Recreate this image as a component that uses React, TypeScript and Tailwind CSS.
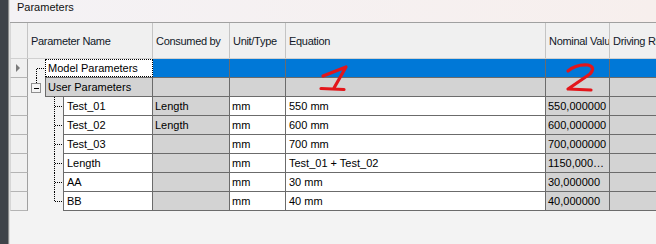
import React from 'react';

type Param = {
  name: string;
  consumed?: string;
  unit: string;
  equation: string;
  nominal: string;
};

const userParams: Param[] = [
  { name: 'Test_01', consumed: 'Length', unit: 'mm', equation: '550 mm', nominal: '550,000000' },
  { name: 'Test_02', consumed: 'Length', unit: 'mm', equation: '600 mm', nominal: '600,000000' },
  { name: 'Test_03', unit: 'mm', equation: '700 mm', nominal: '700,000000' },
  { name: 'Length', unit: 'mm', equation: 'Test_01 + Test_02', nominal: '1150,000000' },
  { name: 'AA', unit: 'mm', equation: '30 mm', nominal: '30,000000' },
  { name: 'BB', unit: 'mm', equation: '40 mm', nominal: '40,000000' },
];

// body grid line colour
const cell = 'h-full border-b border-r border-[#6b6b6b] whitespace-nowrap overflow-hidden';
const headCell =
  'h-full flex items-center pl-[3px] pt-[2px] border-r border-[#c4c4c4] whitespace-nowrap overflow-hidden';

function RowHead({ arrow }: { arrow?: boolean }) {
  return (
    <div className="flex h-full w-[18px] shrink-0 items-center justify-center border-b border-r border-l border-b-[#b4b4b4] border-r-[#a0a0a0] border-l-[#d6d6d6] bg-[#f0f0f0]">
      {arrow && (
        <svg width="5" height="8" viewBox="0 0 5 8" className="ml-[-2px]">
          <path d="M0 0 L4 4 L0 8 Z" fill="#7a7a7a" />
        </svg>
      )}
    </div>
  );
}

function Dot({ d }: { d: string }) {
  return <path d={d} stroke="#000" strokeWidth="1" strokeDasharray="1 1" fill="none" shapeRendering="crispEdges" />;
}

export default function App() {
  return (
    <div className="flex h-[244px] w-[656px] overflow-hidden bg-[#f3f3f3] font-['Liberation_Sans',Arial,sans-serif] text-[11px] text-black">
      {/* dark window edge */}
      <div className="w-[8px] shrink-0 bg-[#3f4349]" />
      <div className="w-[1px] shrink-0 bg-[#8c8c8c]" />
      <div className="w-[1px] shrink-0 bg-[#dcdcdc]" />

      <div className="relative flex min-w-0 flex-1 flex-col">
        <div className="h-[23px] shrink-0 border-b border-[#a0a0a0] bg-gradient-to-r from-[#f4f2f5] to-[#f7efed] pl-[7px] pt-[1px] leading-[13px] text-[#111]">
          Parameters
        </div>

        {/* header */}
        <div className="flex h-[36px] shrink-0 border-b border-[#d0d0d0] bg-[#f0f0f0] tracking-[-0.3px] text-[#101828]">
          <div className="h-full w-[18px] shrink-0 border-r border-l border-r-[#c4c4c4] border-l-[#d6d6d6]" />
          <div className={`${headCell} w-[125px] shrink-0`}>Parameter Name</div>
          <div className={`${headCell} w-[77px] shrink-0`}>Consumed by</div>
          <div className={`${headCell} w-[56px] shrink-0`}>Unit/Type</div>
          <div className={`${headCell} w-[260px] shrink-0`}>Equation</div>
          <div className={`${headCell} w-[64px] shrink-0`}>Nominal Value</div>
          <div className={`${headCell} min-w-0 flex-1 border-r-0`}>Driving Rule</div>
        </div>

        {/* Model Parameters */}
        <div className="flex h-[19px] shrink-0 leading-[18px]">
          <RowHead arrow />
          <div className="flex h-full w-[125px] shrink-0">
            <svg width="17" height="19" className="shrink-0">
              <Dot d="M8.5 9.5 H17" />
              <Dot d="M8.5 10 V19" />
            </svg>
            <div className="h-full flex-1 border-b border-[#6b6b6b]">
              <div className="h-[18px] border border-dotted border-black bg-white pl-[2px] leading-[16px]">
                Model Parameters
              </div>
            </div>
          </div>
          <div className={`${cell} w-[77px] shrink-0 bg-[#0078d7]`} />
          <div className={`${cell} w-[56px] shrink-0 bg-[#0078d7]`} />
          <div className={`${cell} w-[260px] shrink-0 bg-[#0078d7]`} />
          <div className={`${cell} w-[64px] shrink-0 bg-[#0078d7]`} />
          <div className={`${cell} min-w-0 flex-1 border-r-0 bg-[#0078d7]`} />
        </div>

        {/* User Parameters */}
        <div className="flex h-[19px] shrink-0 leading-[18px]">
          <RowHead />
          <div className="flex h-full w-[125px] shrink-0">
            <svg width="17" height="19" className="shrink-0">
              <Dot d="M8.5 0 V5" />
              <rect x="3.5" y="5.5" width="9" height="9" fill="#f4f4f4" stroke="#8f8f8f" shapeRendering="crispEdges" />
              <path d="M6 10.5 H11" stroke="#000" shapeRendering="crispEdges" />
            </svg>
            <div className={`${cell} flex-1 border-l bg-[#d3d3d3] pl-[2px]`}>User Parameters</div>
          </div>
          <div className={`${cell} w-[77px] shrink-0 bg-[#d3d3d3]`} />
          <div className={`${cell} w-[56px] shrink-0 bg-[#d3d3d3]`} />
          <div className={`${cell} w-[260px] shrink-0 bg-[#d3d3d3]`} />
          <div className={`${cell} w-[64px] shrink-0 bg-[#d3d3d3]`} />
          <div className={`${cell} min-w-0 flex-1 border-r-0 bg-[#d3d3d3]`} />
        </div>

        {userParams.map((p, i) => {
          const last = i === userParams.length - 1;
          return (
            <div key={p.name} className="flex h-[19px] shrink-0 leading-[18px]">
              <RowHead />
              <div className="flex h-full w-[125px] shrink-0">
                <svg width="35" height="19" className="shrink-0">
                  <Dot d={last ? 'M26.5 0 V9.5' : 'M26.5 0 V19'} />
                  <Dot d="M27 9.5 H35" />
                </svg>
                <div className={`${cell} flex-1 border-l bg-white pl-[3px]`}>{p.name}</div>
              </div>
              <div className={`${cell} w-[77px] shrink-0 bg-[#d3d3d3] pl-[2px]`}>{p.consumed ?? ''}</div>
              <div className={`${cell} w-[56px] shrink-0 bg-white pl-[2px]`}>{p.unit}</div>
              <div className={`${cell} w-[260px] shrink-0 bg-white pl-[3px]`}>{p.equation}</div>
              <div className={`${cell} w-[64px] shrink-0 truncate bg-[#d3d3d3] pl-[2px]`}>{p.nominal}</div>
              <div className={`${cell} min-w-0 flex-1 border-r-0 bg-[#d3d3d3]`} />
            </div>
          );
        })}

        {/* hand-drawn markers */}
        <svg
          className="pointer-events-none absolute left-0 top-0"
          width="646"
          height="244"
          viewBox="10 0 646 244"
        >
          <path
            d="M323 76 L346 67 L334 88 M321 88.5 L344 89.5"
            stroke="#e3161b"
            strokeWidth="3.2"
            strokeLinecap="round"
            strokeLinejoin="round"
            fill="none"
          />
          <path
            d="M568 71 Q576 64 588 65 Q596 67 590 74 L568 89 L591 90"
            stroke="#e3161b"
            strokeWidth="3.2"
            strokeLinecap="round"
            strokeLinejoin="round"
            fill="none"
          />
        </svg>
      </div>
    </div>
  );
}
